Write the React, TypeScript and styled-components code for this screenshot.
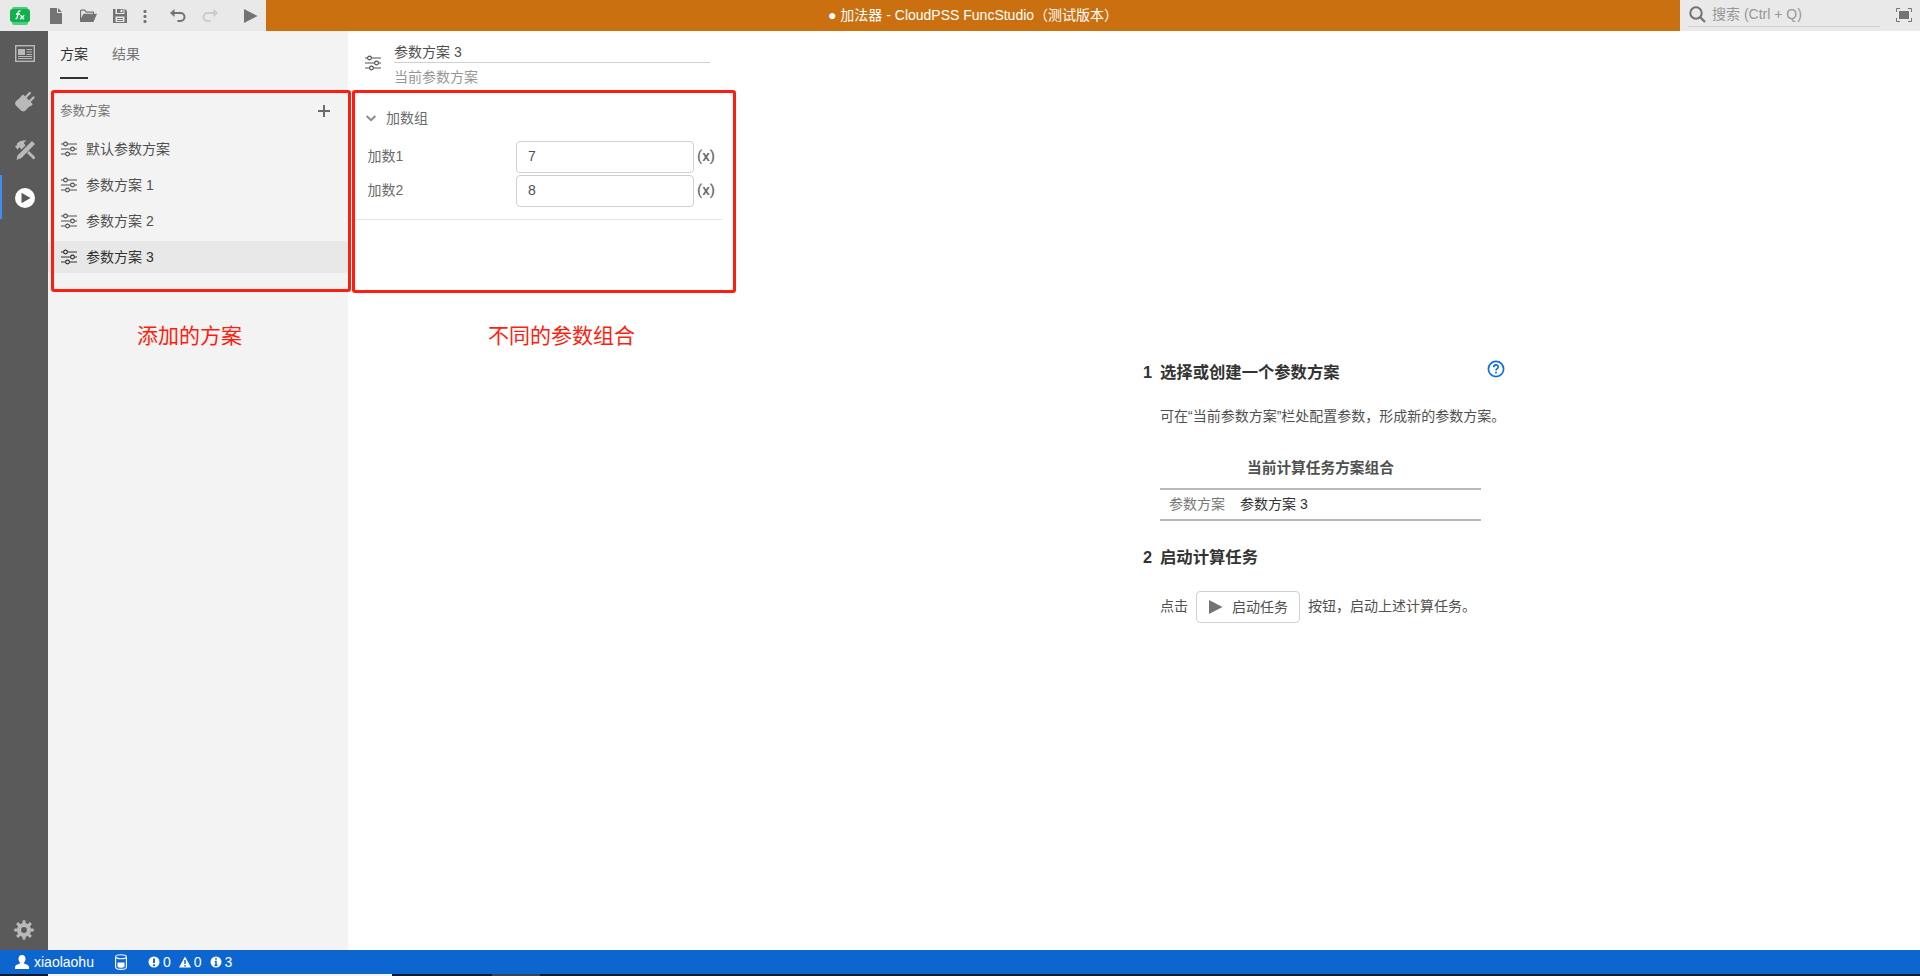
import React from 'react';
import styled, { createGlobalStyle } from 'styled-components';

const GlobalStyle = createGlobalStyle`
  *, *::before, *::after { box-sizing: border-box; }
  body {
    margin: 0;
    overflow: hidden;
    background: #fff;
    color: #505050;
    font: 14px/20px "Liberation Sans", "Noto Sans CJK SC", sans-serif;
  }
  svg { display: block; flex: none; }
`;

const Shell = styled.div`
  position: relative;
  display: flex;
  flex-direction: column;
  width: 1920px;
  height: 976px;
`;

/* ---------- top bar ---------- */
const TopBar = styled.header`
  display: flex;
  height: 31px;
  background: #cb7011;
`;
const ToolGroup = styled.div`
  display: flex;
  align-items: center;
  width: 266px;
  padding-left: 10px;
  background: #e9e9e9;
  color: #737373;
`;
const Tool = styled.span<{ $gap: number; $faded?: boolean }>`
  margin-left: ${(p) => p.$gap}px;
  opacity: ${(p) => (p.$faded ? 0.25 : 1)};
`;
const Title = styled.div`
  flex: 1;
  padding: 5px 0 0 562px;
  color: #fff;
  white-space: nowrap;
`;
const SearchArea = styled.div`
  display: flex;
  width: 240px;
  padding-left: 8px;
  background: #e9e9e9;
  color: #737373;
`;
const SearchBox = styled.div`
  display: flex;
  align-items: center;
  gap: 6px;
  width: 192px;
  height: 27px;
  margin-right: 16px;
  padding: 2px 0 0 1px;
  border-bottom: 1px solid #d0d0d0;
  color: #979797;
  svg { color: #737373; margin-top: 1px; }
`;
const Fullscreen = styled.span`
  margin-top: 8px;
`;

/* ---------- body ---------- */
const Body = styled.div`
  display: flex;
  height: 919px;
`;
const Rail = styled.nav`
  display: flex;
  flex-direction: column;
  width: 48px;
  background: #5a5a5a;
`;
const RailItem = styled.div`
  display: flex;
  align-items: center;
  height: 48px;
  padding: 0 0 3px 15px;
  color: #b9b9b9;
`;
const ActiveItem = styled(RailItem)`
  height: 44px;
  padding: 2px 0 0 13px;
  border-left: 2px solid #3a8ff0;
`;
const RailBottom = styled(RailItem)`
  height: 40px;
  margin-top: auto;
  padding: 0 0 0 14px;
`;

const SchemePanel = styled.aside`
  width: 300px;
  background: #f3f3f3;
`;
const Tabs = styled.div`
  display: flex;
  gap: 24px;
  height: 48px;
  padding-left: 12px;
`;
const Tab = styled.div<{ $active?: boolean }>`
  height: 48px;
  padding-top: 13px;
  color: ${(p) => (p.$active ? '#333' : '#777')};
  border-bottom: 2px solid ${(p) => (p.$active ? '#333' : 'transparent')};
`;
const ListHeader = styled.div`
  display: flex;
  align-items: center;
  justify-content: space-between;
  height: 36px;
  margin-top: 14px;
  padding: 0 18px 0 12px;
  color: #737373;
  font-size: 12.6px;
`;
const SchemeList = styled.div`
  display: flex;
  flex-direction: column;
  gap: 4px;
  margin-top: 4px;
`;
const SchemeRow = styled.div<{ $active?: boolean }>`
  display: flex;
  align-items: center;
  gap: 9px;
  height: 32px;
  padding: 0 0 1px 13px;
  border-radius: 4px;
  color: ${(p) => (p.$active ? '#333' : '#505050')};
  background: ${(p) => (p.$active ? '#e8e8e8' : 'transparent')};
`;

const ParamPanel = styled.section`
  width: 374px;
`;
const ParamHeader = styled.div`
  display: flex;
  align-items: flex-start;
  gap: 13px;
  height: 59px;
  padding: 11px 0 0 17px;
  svg { margin-top: 13px; }
`;
const NameBlock = styled.div`
  width: 316px;
  color: #505050;
`;
const NameField = styled.div`
  height: 21px;
  border-bottom: 1px solid #d0d0d0;
`;
const NameHint = styled.div`
  padding-top: 4px;
  color: #979797;
`;
const Group = styled.div`
  height: 130px;
  padding-top: 18px;
  border-bottom: 1px solid #e6e6e6;
`;
const GroupTitle = styled.div`
  display: flex;
  align-items: center;
  gap: 10px;
  height: 20px;
  padding-left: 18px;
  margin-bottom: 13px;
  color: #6b6b6b;
`;
const Field = styled.div`
  display: flex;
  align-items: center;
  height: 32px;
  margin-bottom: 2px;
  padding-left: 19.500px;
  color: #6b6b6b;
`;
const FieldLabel = styled.span`
  width: 148.500px;
  padding-bottom: 2px;
`;
const FieldInput = styled.div`
  width: 178px;
  height: 32px;
  margin-right: 3px;
  padding: 4px 11px;
  border: 1px solid #d0d0d0;
  border-radius: 4px;
  color: #505050;
`;
const Expr = styled.span`
  padding-bottom: 2px;
  font: 500 15px/20px Roboto, sans-serif;
  color: #6b6b6b;
`;

/* ---------- guide ---------- */
const Guide = styled.main`
  width: 370px;
  margin: 330px 0 0 421px;
  white-space: nowrap;
`;
const StepTitle = styled.h2`
  display: flex;
  align-items: center;
  height: 22px;
  margin: 0;
  color: #333;
  font-size: 16.33px;
  font-weight: 700;
`;
const StepNo = styled.span`
  width: 17px;
`;
const StepText = styled.span`
  width: 327px;
  padding-bottom: 2px;
  font-family: "Noto Sans CJK SC", sans-serif;
`;
const HelpIcon = styled.span`
  margin-top: -6px;
  color: #0e6fe0;
`;
const StepBody = styled.div`
  padding-left: 17px;
`;
const Hint = styled.p`
  margin: 23px 0 32px;
`;
const Combo = styled.div`
  width: 321px;
  margin-bottom: 25px;
`;
const ComboTitle = styled.div`
  margin-bottom: 10px;
  font-size: 14.7px;
  font-weight: 600;
  text-align: center;
`;
const ComboRow = styled.div`
  display: flex;
  gap: 15px;
  height: 33px;
  padding: 4px 9px;
  border-top: 2px solid #b9b9b9;
  border-bottom: 2px solid #b9b9b9;
  color: #333;
`;
const Muted = styled.span`
  color: #777;
`;
const StartLine = styled.div`
  display: flex;
  align-items: center;
  gap: 8px;
  margin-top: 23px;
`;
const LineText = styled.span`
  padding-bottom: 2px;
`;
const StartButton = styled.div`
  display: flex;
  align-items: center;
  gap: 9px;
  width: 104px;
  height: 32px;
  padding-left: 12px;
  border: 1px solid #d0d0d0;
  border-radius: 4px;
  svg { color: #737373; }
`;

/* ---------- status bar ---------- */
const StatusBar = styled.footer`
  display: flex;
  align-items: center;
  height: 24px;
  padding-left: 15px;
  background: #0d66d0;
  color: #fff;
`;
const StatusItem = styled.span<{ $gap?: number; $inner?: number }>`
  display: flex;
  align-items: center;
  gap: ${(p) => p.$inner ?? 3}px;
  margin-left: ${(p) => p.$gap ?? 0}px;
`;
const Taskbar = styled.div`
  display: flex;
  height: 2px;
  padding-left: 48px;
  background: #10192e;
`;
const TaskSegment = styled.span<{ $w: number; $bg: string }>`
  width: ${(p) => p.$w}px;
  background: ${(p) => p.$bg};
`;

/* ---------- annotations over the page ---------- */
const Frame = styled.div<{ $x: number; $w: number; $h: number }>`
  position: absolute;
  left: ${(p) => p.$x}px;
  top: 90px;
  width: ${(p) => p.$w}px;
  height: ${(p) => p.$h}px;
  border: 3px solid #ff1d0f;
  border-radius: 3px;
`;
const Note = styled.div<{ $x: number }>`
  position: absolute;
  left: ${(p) => p.$x}px;
  top: 321px;
  color: #ff1d0f;
  font-size: 21px;
  line-height: 30px;
`;

/* ---------- icons ---------- */
const Logo = () => (
  <svg width="20" height="18" viewBox="0 0 20 18">
    <rect x="2" width="16" height="18" rx="2" fill="#45cf80" />
    <rect y="2" width="20" height="13" rx="2.500" fill="#12b04a" />
    <path d="M10.500 4.200c-1.800-.7-2.300.4-2.600 2.300l-.6 3.700c-.2 1.300-.8 1.700-1.800 1.300M6 7h4M10.500 8.200l3.500 4M14.200 8.200l-4 4" fill="none" stroke="#fff" strokeWidth="1.300" />
  </svg>
);
const FileIcon = () => (
  <svg width="12" height="16" fill="currentColor"><path d="M0 0h7v5h5v11H0zM8 0l4 4H8z" /></svg>
);
const FolderIcon = () => (
  <svg width="17" height="14" fill="currentColor">
    <path d="M0 13V1.500L1 .5h4L6.500 2.500H14V5h-1.200V3.700H5.800L4.500 1.700H1.200V9L3.500 4.700H17L13.500 13z" />
  </svg>
);
const SaveIcon = () => (
  <svg width="14" height="14" fill="currentColor" fillRule="evenodd">
    <path d="M0 0h2.500v5h9V0H12l2 2v12H0zM4 0h6.500v4H4zM7.500 .8v2.400h2V.8zM2.500 7.500V13h9V7.500zM4 9h6v1H4zM4 11h6v1H4z" />
  </svg>
);
const DotsIcon = () => (
  <svg width="4" height="14" fill="currentColor">
    <rect x=".5" y="1" width="3" height="3" rx="1" /><rect x=".5" y="6" width="3" height="3" rx="1" /><rect x=".5" y="11" width="3" height="3" rx="1" />
  </svg>
);
const UndoIcon = ({ flip }: { flip?: boolean }) => (
  <svg width="16" height="13" fill="none" stroke="currentColor" strokeWidth="2">
    <g transform={flip ? 'matrix(-1 0 0 1 16 0)' : undefined}>
      <path d="M2.500 4h8a4 4 0 0 1 0 8H7.500" />
      <path d="M4.500 0v8L0 4z" fill="currentColor" stroke="none" />
    </g>
  </svg>
);
const PlayIcon = () => (
  <svg width="14" height="14" fill="currentColor"><path d="M0 0l13.500 7L0 14z" /></svg>
);
const SearchIcon = () => (
  <svg width="17" height="17" fill="none" stroke="currentColor" strokeWidth="2">
    <circle cx="7" cy="7" r="5.700" /><path d="M11 11l5 5" strokeWidth="2.300" />
  </svg>
);
const FullscreenIcon = () => (
  <svg width="16" height="14" fill="none" stroke="currentColor">
    <path d="M4 .5H.5V4M12 .5h3.500V4M.5 10v3.500H4M15.500 10v3.500H12" />
    <rect x="3" y="3" width="10" height="8" fill="currentColor" stroke="none" />
  </svg>
);
const SlidersIcon = () => (
  <svg width="16" height="16" fill="none" stroke="currentColor" strokeWidth="1.150">
    <path d="M0 3h2.500M6.500 3H16M0 8h9.500M13.500 8H16M0 13h4.500M8.500 13H16" />
    <circle cx="4.500" cy="3" r="1.900" /><circle cx="11.500" cy="8" r="1.900" /><circle cx="6.500" cy="13" r="1.900" />
  </svg>
);
const PlusIcon = () => (
  <svg width="12" height="12" stroke="#6b6b6b" strokeWidth="2"><path d="M0 6h12M6 0v12" /></svg>
);
const ChevronIcon = () => (
  <svg width="10" height="7" fill="none" stroke="#8a8a8a" strokeWidth="2"><path d="M.6 1l4.400 4.200L9.400 1" /></svg>
);
const HelpCircle = () => (
  <svg width="18" height="18" fill="none" stroke="currentColor" strokeWidth="1.700">
    <circle cx="9" cy="9" r="7.600" />
    <path d="M6.800 7.200c0-3 4.400-3 4.400-.3 0 1.700-2.200 1.700-2.200 3.600M9 11.800v1.700" />
  </svg>
);
const NewsIcon = () => (
  <svg width="20" height="17" fill="none" stroke="currentColor">
    <rect x=".7" y=".7" width="18.600" height="15.600" strokeWidth="1.400" />
    <rect x="3" y="4" width="7" height="6" fill="currentColor" stroke="none" />
    <path d="M11.500 4.500H17M11.500 7H17M11.500 9.500H17M3 11.500h14M3 13.500h14" strokeWidth="1.200" />
  </svg>
);
const PlugIcon = () => (
  <svg width="20" height="21" fill="currentColor">
    <path d="M7 4.200Q8 3.200 9 4.200L17 12.200q1 1 0 2l-1 .8q-1.500.2-2.500 1.200L10.500 19.500q-2.300 1.800-4.500 0L.9 14.500q-1.700-2 0-4.300L5 6.800Q5.800 5.200 7 4.200z" />
    <path d="M10.500 6.500l4.300-4.500M14.500 10.500l4-4" stroke="currentColor" strokeWidth="2.400" strokeLinecap="round" />
  </svg>
);
const ToolsIcon = () => (
  <svg width="20" height="20" fill="currentColor">
    <path d="M0 6.500L2 5V3.500C4.500.5 8 0 12 .8 10 1.500 8.800 2.500 9 3.500L10.500 5.500 6.500 9.500 4.300 7 3.500 8.500 2.500 9.500z" />
    <path d="M17 1l3 3L6.500 18 1.500 20 2.500 15.500z" />
    <path d="M13 12l6.500 6.500" stroke="currentColor" strokeWidth="2.800" />
  </svg>
);
const RunIcon = () => (
  <svg width="20" height="20"><circle cx="10" cy="10" r="10" fill="#fff" /><path d="M6.500 4.700L15.500 10l-9 5.300z" fill="#5a5a5a" /></svg>
);
const GearIcon = () => (
  <svg width="20" height="20" viewBox="-10 -10 20 20" fill="currentColor">
    {[0, 45, 90, 135].map((a) => (
      <rect key={a} x="-1.500" y="-9.800" width="3" height="19.600" rx=".8" transform={`rotate(${a})`} />
    ))}
    <circle r="7" /><circle r="2.900" fill="#5a5a5a" />
  </svg>
);
const UserIcon = () => (
  <svg width="14" height="14" fill="currentColor">
    <path d="M7 0c2.200 0 3.500 1.600 3.500 3.800 0 1.700-.7 3.200-1.700 4 .2 1.500 4.700 1.500 5.200 4.200v2H0v-2c.5-2.700 5-2.700 5.200-4.200-1-.8-1.700-2.300-1.700-4C3.500 1.600 4.800 0 7 0z" />
  </svg>
);
const StorageIcon = () => (
  <svg width="12" height="16" fill="none" stroke="currentColor">
    <path d="M.6 3v10c0 3.200 10.800 3.200 10.800 0V3" strokeWidth="1.100" />
    <ellipse cx="6" cy="2.700" rx="5.400" ry="2" strokeWidth="1.100" />
    <path d="M2.500 8.500h7V13c-1.500 1-5.500 1-7 0z" fill="currentColor" stroke="none" />
  </svg>
);
const ErrorIcon = () => (
  <svg width="12" height="12"><circle cx="6" cy="6" r="5.500" fill="#fff" /><path d="M6 2.500v4.500M6 8.300v1.700" stroke="#0d66d0" strokeWidth="1.900" /></svg>
);
const WarnIcon = () => (
  <svg width="12" height="12"><path d="M6 .5L12 11.500H0z" fill="#fff" /><path d="M6 4v4M6 9v1.500" stroke="#0d66d0" strokeWidth="1.500" /></svg>
);
const InfoIcon = () => (
  <svg width="12" height="12"><circle cx="6" cy="6" r="5.500" fill="#fff" /><path d="M6 2v1.700M4.700 5.500H6V9M4.500 9.200h3" stroke="#0d66d0" strokeWidth="1.500" fill="none" /></svg>
);

const schemes = ['默认参数方案', '参数方案 1', '参数方案 2', '参数方案 3'];
const fields = [
  { label: '加数1', value: '7' },
  { label: '加数2', value: '8' },
];

export default function App() {
  return (
    <>
      <GlobalStyle />
      <Shell>
        <TopBar>
          <ToolGroup>
            <Logo />
            <Tool $gap={20}><FileIcon /></Tool>
            <Tool $gap={18}><FolderIcon /></Tool>
            <Tool $gap={16}><SaveIcon /></Tool>
            <Tool $gap={16}><DotsIcon /></Tool>
            <Tool $gap={23}><UndoIcon /></Tool>
            <Tool $gap={16} $faded><UndoIcon flip /></Tool>
            <Tool $gap={26}><PlayIcon /></Tool>
          </ToolGroup>
          <Title>● 加法器 - CloudPSS FuncStudio（测试版本）</Title>
          <SearchArea>
            <SearchBox><SearchIcon />搜索 (Ctrl + Q)</SearchBox>
            <Fullscreen><FullscreenIcon /></Fullscreen>
          </SearchArea>
        </TopBar>

        <Body>
          <Rail>
            <RailItem><NewsIcon /></RailItem>
            <RailItem><PlugIcon /></RailItem>
            <RailItem><ToolsIcon /></RailItem>
            <ActiveItem><RunIcon /></ActiveItem>
            <RailBottom><GearIcon /></RailBottom>
          </Rail>

          <SchemePanel>
            <Tabs>
              <Tab $active>方案</Tab>
              <Tab>结果</Tab>
            </Tabs>
            <ListHeader>参数方案<PlusIcon /></ListHeader>
            <SchemeList>
              {schemes.map((name, i) => (
                <SchemeRow key={name} $active={i === 3}><SlidersIcon />{name}</SchemeRow>
              ))}
            </SchemeList>
          </SchemePanel>

          <ParamPanel>
            <ParamHeader>
              <SlidersIcon />
              <NameBlock>
                <NameField>参数方案 3</NameField>
                <NameHint>当前参数方案</NameHint>
              </NameBlock>
            </ParamHeader>
            <Group>
              <GroupTitle><ChevronIcon />加数组</GroupTitle>
              {fields.map((f) => (
                <Field key={f.label}>
                  <FieldLabel>{f.label}</FieldLabel>
                  <FieldInput>{f.value}</FieldInput>
                  <Expr>(x)</Expr>
                </Field>
              ))}
            </Group>
          </ParamPanel>

          <Guide>
            <StepTitle>
              <StepNo>1</StepNo>
              <StepText>选择或创建一个参数方案</StepText>
              <HelpIcon><HelpCircle /></HelpIcon>
            </StepTitle>
            <StepBody>
              <Hint>可在“当前参数方案”栏处配置参数，形成新的参数方案。</Hint>
              <Combo>
                <ComboTitle>当前计算任务方案组合</ComboTitle>
                <ComboRow><Muted>参数方案</Muted>参数方案 3</ComboRow>
              </Combo>
            </StepBody>
            <StepTitle>
              <StepNo>2</StepNo>
              <StepText>启动计算任务</StepText>
            </StepTitle>
            <StepBody>
              <StartLine>
                <LineText>点击</LineText>
                <StartButton><PlayIcon />启动任务</StartButton>
                <LineText>按钮，启动上述计算任务。</LineText>
              </StartLine>
            </StepBody>
          </Guide>
        </Body>

        <StatusBar>
          <StatusItem $inner={5}><UserIcon />xiaolaohu</StatusItem>
          <StatusItem $gap={21}><StorageIcon /></StatusItem>
          <StatusItem $gap={21}><ErrorIcon />0</StatusItem>
          <StatusItem $gap={8}><WarnIcon />0</StatusItem>
          <StatusItem $gap={8}><InfoIcon />3</StatusItem>
        </StatusBar>
        <Taskbar>
          <TaskSegment $w={344} $bg="#f3f3f3" />
          <TaskSegment $w={100} $bg="#10192e" />
          <TaskSegment $w={48} $bg="#3c4354" />
        </Taskbar>

        <Frame $x={51} $w={300} $h={202} />
        <Frame $x={352} $w={384} $h={203} />
        <Note $x={137}>添加的方案</Note>
        <Note $x={488}>不同的参数组合</Note>
      </Shell>
    </>
  );
}
